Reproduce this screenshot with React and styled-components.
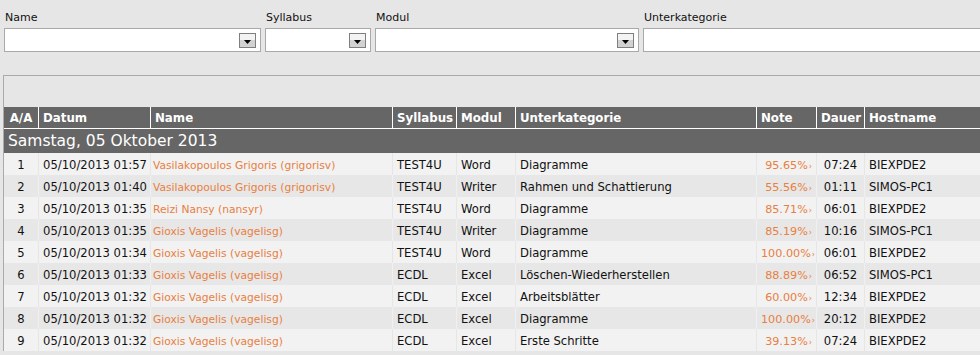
import React from "react";
import styled, { createGlobalStyle } from "styled-components";

const GlobalStyle = createGlobalStyle`
  html, body {
    margin: 0;
    padding: 0;
    background: #e6e6e6;
    overflow: hidden;
  }
  body {
    font-family: "DejaVu Sans", Verdana, sans-serif;
    font-size: 11px;
    color: #111;
  }
`;

const COLS = "35px 112px 242px 64px 59px 241px 60px 48px 140px";

const rows = [
  ["1", "05/10/2013 01:57", "Vasilakopoulos Grigoris (grigorisv)", "TEST4U", "Word", "Diagramme", "95.65%", "07:24", "BIEXPDE2"],
  ["2", "05/10/2013 01:40", "Vasilakopoulos Grigoris (grigorisv)", "TEST4U", "Writer", "Rahmen und Schattierung", "55.56%", "01:11", "SIMOS-PC1"],
  ["3", "05/10/2013 01:35", "Reizi Nansy (nansyr)", "TEST4U", "Word", "Diagramme", "85.71%", "06:01", "BIEXPDE2"],
  ["4", "05/10/2013 01:35", "Gioxis Vagelis (vagelisg)", "TEST4U", "Writer", "Diagramme", "85.19%", "10:16", "SIMOS-PC1"],
  ["5", "05/10/2013 01:34", "Gioxis Vagelis (vagelisg)", "TEST4U", "Word", "Diagramme", "100.00%", "06:01", "BIEXPDE2"],
  ["6", "05/10/2013 01:33", "Gioxis Vagelis (vagelisg)", "ECDL", "Excel", "Löschen-Wiederherstellen", "88.89%", "06:52", "SIMOS-PC1"],
  ["7", "05/10/2013 01:32", "Gioxis Vagelis (vagelisg)", "ECDL", "Excel", "Arbeitsblätter", "60.00%", "12:34", "BIEXPDE2"],
  ["8", "05/10/2013 01:32", "Gioxis Vagelis (vagelisg)", "ECDL", "Excel", "Diagramme", "100.00%", "20:12", "BIEXPDE2"],
  ["9", "05/10/2013 01:32", "Gioxis Vagelis (vagelisg)", "ECDL", "Excel", "Erste Schritte", "39.13%", "07:24", "BIEXPDE2"],
];

const filters = [
  { label: "Name", width: 257, button: true },
  { label: "Syllabus", width: 106, button: true },
  { label: "Modul", width: 264, button: true },
  { label: "Unterkategorie", width: 400, button: false },
];

const headers = ["A/A", "Datum", "Name", "Syllabus", "Modul", "Unterkategorie", "Note", "Dauer", "Hostname"];

const App = () => {
  return (
    <Page>
      <GlobalStyle />
      <FilterBar>
        {filters.map((f) => (
          <Filter key={f.label} style={{ width: f.width }}>
            <Label>{f.label}</Label>
            <Select>
              {f.button && (
                <DropButton>
                  <svg width="7" height="4" viewBox="0 0 7 4">
                    <path d="M0 0h7L3.5 4z" fill="#000" />
                  </svg>
                </DropButton>
              )}
            </Select>
          </Filter>
        ))}
      </FilterBar>

      <Panel>
        <HeadRow>
          {headers.map((h, i) => (
            <HeadCell key={h} center={i === 0}>
              {h}
            </HeadCell>
          ))}
        </HeadRow>
        <GroupRow>Samstag, 05 Oktober 2013</GroupRow>
        {rows.map((r, i) => {
          const odd = i % 2 === 0;
          return (
            <DataRow key={r[0]} odd={odd}>
              <Cell odd={odd} align="center">{r[0]}</Cell>
              <Cell odd={odd}>{r[1]}</Cell>
              <NameCell odd={odd}>{r[2]}</NameCell>
              <Cell odd={odd}>{r[3]}</Cell>
              <Cell odd={odd}>{r[4]}</Cell>
              <Cell odd={odd}>{r[5]}</Cell>
              <NoteCell odd={odd}>
                {r[6]}
                <Tick>›</Tick>
              </NoteCell>
              <Cell odd={odd} align="center">{r[7]}</Cell>
              <Cell odd={odd}>{r[8]}</Cell>
            </DataRow>
          );
        })}
      </Panel>
    </Page>
  );
};

//STYLING
const Page = styled.div`
  width: 1000px;
`;

const FilterBar = styled.div`
  display: flex;
  gap: 4px;
  padding: 11px 0 0 4px;
`;

const Filter = styled.div`
  display: flex;
  flex-direction: column;
  flex-shrink: 0;
`;

const Label = styled.div`
  height: 14px;
  line-height: 14px;
  padding-left: 1px;
  margin-bottom: 3px;
  color: #111;
`;

const Select = styled.div`
  box-sizing: border-box;
  height: 24px;
  background: #fff;
  border: 1px solid #a9a9a9;
  display: flex;
  justify-content: flex-end;
  align-items: center;
  padding: 1px 4px 0 0;
`;

const DropButton = styled.div`
  box-sizing: border-box;
  width: 17px;
  height: 15px;
  border: 1px solid #7f7f7f;
  background: linear-gradient(#f3f3f3 0, #f3f3f3 45%, #d2d2d2 45%, #d2d2d2 100%);
  display: flex;
  justify-content: center;
  align-items: flex-end;
  padding-bottom: 3px;
`;

const Panel = styled.div`
  margin: 23px 0 0 3px;
  border-top: 1px solid #aaa;
  border-left: 1px solid #aaa;
  padding-top: 31px;
`;

const HeadRow = styled.div`
  display: grid;
  grid-template-columns: ${COLS};
  height: 22px;
  box-sizing: border-box;
  border-bottom: 1px solid #fff;
  background: #666;
`;

const HeadCell = styled.div`
  box-sizing: border-box;
  border-right: 1px solid #fff;
  color: #fff;
  font-weight: bold;
  font-size: 11.8px;
  line-height: 22px;
  padding-left: ${(p) => (p.center ? 0 : 4)}px;
  text-align: ${(p) => (p.center ? "center" : "left")};
  white-space: nowrap;
  overflow: hidden;
`;

const GroupRow = styled.div`
  height: 24px;
  line-height: 24px;
  background: #666;
  color: #fff;
  font-size: 15.5px;
  padding-left: 4px;
`;

const DataRow = styled.div`
  display: grid;
  grid-template-columns: ${COLS};
  height: 22px;
  background: ${(p) => (p.odd ? "#f2f2f2" : "#e7e7e7")};
`;

const Cell = styled.div`
  box-sizing: border-box;
  border-right: 1px solid ${(p) => (p.odd ? "#e6e6e6" : "#f0f0f0")};
  padding: 3px 4px 0 4px;
  font-size: 11.6px;
  line-height: 19px;
  white-space: nowrap;
  overflow: hidden;
  text-align: ${(p) => p.align || "left"};
`;

const NameCell = styled(Cell)`
  color: #e8803f;
  padding-left: 2px;
  font-size: 10.7px;
`;

const NoteCell = styled(Cell)`
  color: #e8803f;
  text-align: right;
  padding-right: 4px;
  font-size: 11.2px;
`;

const Tick = styled.span`
  font-size: 8px;
  margin-left: 1px;
`;

export default App;
